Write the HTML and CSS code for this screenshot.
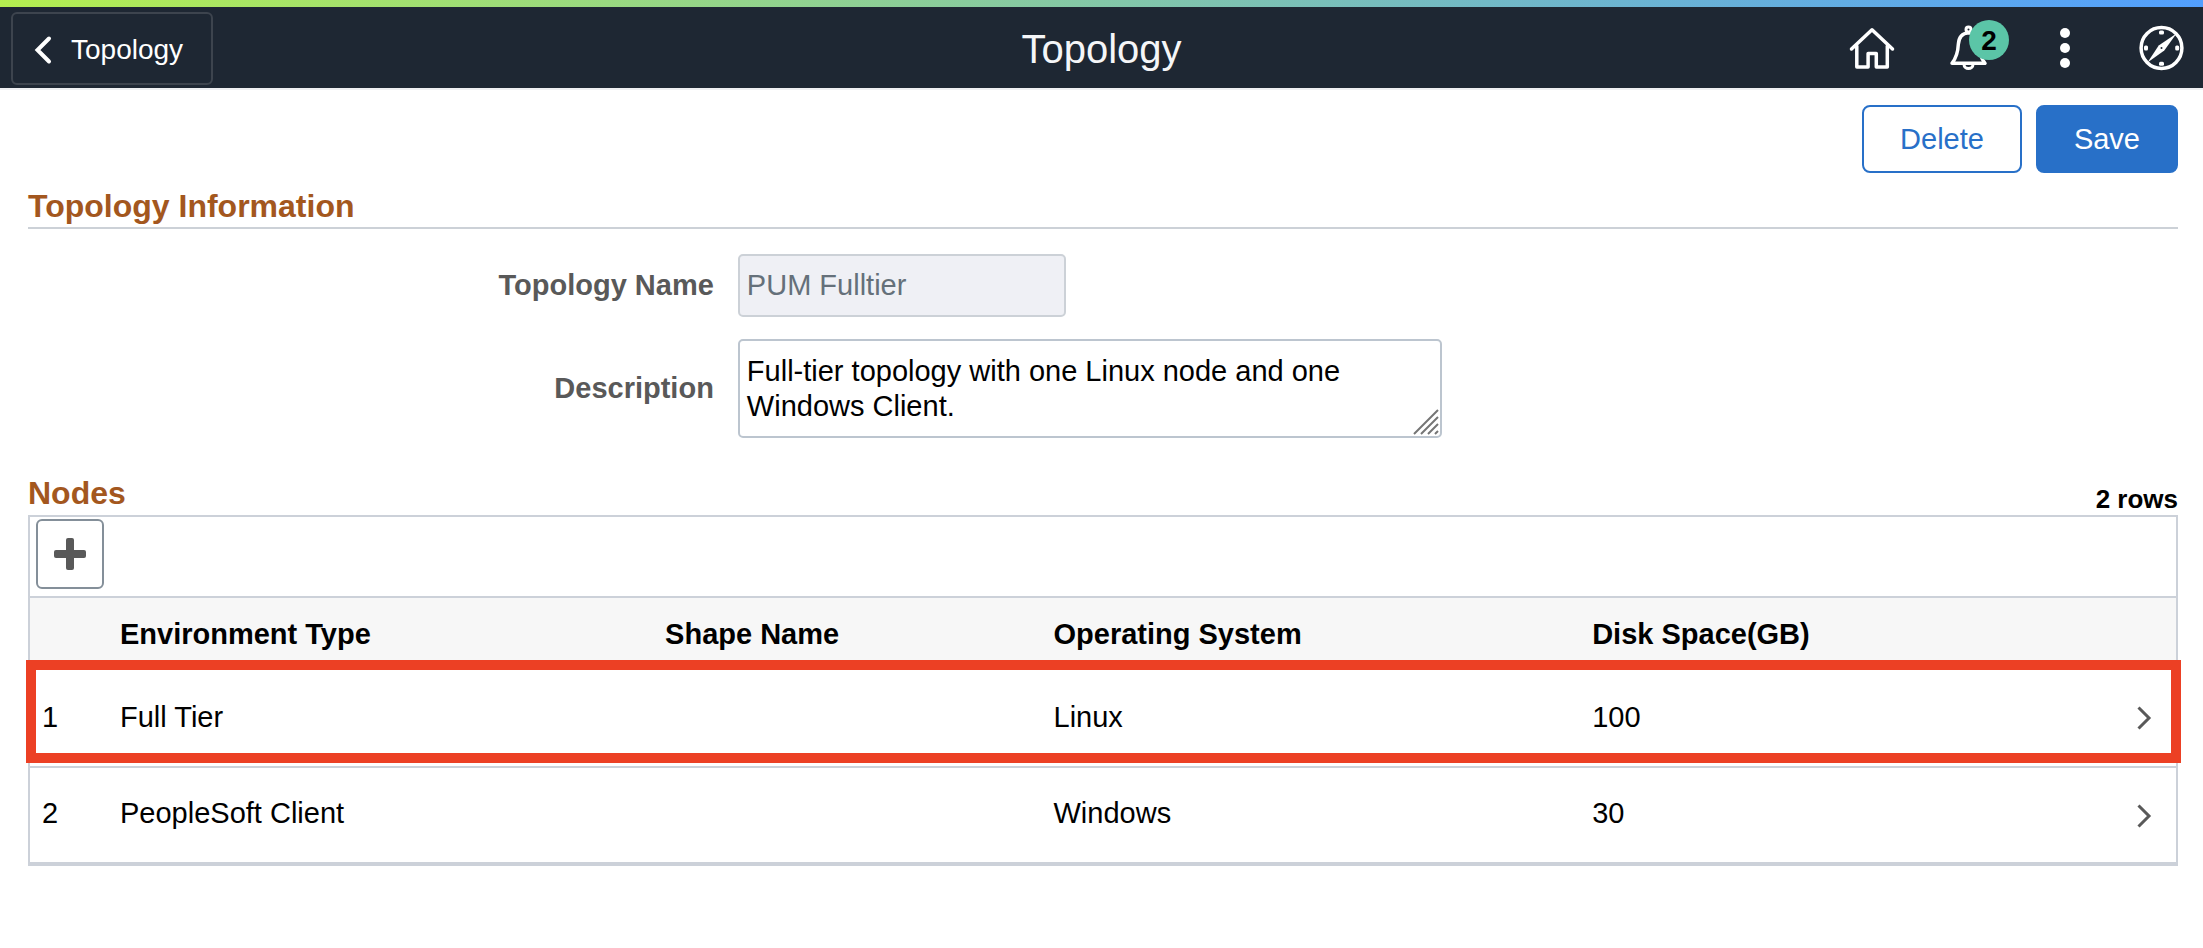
FILE: index.html
```html
<!DOCTYPE html>
<html lang="en">
<head>
<meta charset="utf-8">
<meta name="viewport" content="width=device-width, initial-scale=1">
<title>Topology</title>
<link rel="stylesheet" href="styles.css">
</head>
<body>
<header class="banner">
  <div class="banner-start">
    <button type="button" class="back">
      <svg class="back-icon" width="20" height="30" viewBox="0 0 20 30" aria-hidden="true"><path d="M16 3.5 4.5 15 16 26.500"/></svg>
      <span>Topology</span>
    </button>
  </div>
  <h1 class="banner-title">Topology</h1>
  <nav class="banner-actions" aria-label="Global actions">
    <button type="button" class="icon-button" aria-label="Home">
      <svg width="48" height="49" viewBox="0 0 48 49" aria-hidden="true">
        <path class="line" d="M4.500 25 25 5.800 45.500 25M9.800 22v21.100h11.300V29.600h8.200v13.500h11V22"/>
      </svg>
    </button>
    <button type="button" class="icon-button" aria-label="Notifications">
      <svg width="48" height="49" viewBox="0 0 48 49" aria-hidden="true">
        <path class="line" d="M8 39.300C12.500 33.500 14 28 14.300 20.500 14.800 13.500 18 9.300 24.500 8.800 31 9.300 34.300 13.500 34.700 20.500 35 28 36.500 33.500 41 39.300Z"/>
        <circle class="line thin" cx="24.500" cy="5.500" r="2.500"/>
        <path class="line thin" d="M20 40.500a4.500 4 0 0 0 9 0"/>
      </svg>
      <span class="badge">2</span>
    </button>
    <button type="button" class="icon-button" aria-label="Actions">
      <svg width="48" height="49" viewBox="0 0 48 49" aria-hidden="true">
        <g class="fill"><circle cx="24" cy="9" r="5"/><circle cx="24" cy="24" r="5"/><circle cx="24" cy="39" r="5"/></g>
      </svg>
    </button>
    <button type="button" class="icon-button" aria-label="Navigator">
      <svg width="48" height="49" viewBox="0 0 48 49" aria-hidden="true">
        <circle class="line" cx="23.500" cy="24" r="20.400"/>
        <path class="fill" d="M38.500 9.500 26.300 26.500 9.500 38.500 20.700 21.500Z"/>
        <circle class="hole" cx="23.500" cy="24" r="1"/>
        <g class="fill"><rect x="21" y="6.500" width="5" height="4" rx="1.500"/><rect x="21" y="37.700" width="5" height="4" rx="1.500"/><rect x="6" y="21.500" width="4" height="5" rx="1.500"/><rect x="37.200" y="21.500" width="4" height="5" rx="1.500"/></g>
      </svg>
    </button>
  </nav>
</header>

<main class="page">
  <div class="page-actions">
    <button type="button" class="button">Delete</button>
    <button type="submit" class="button primary" form="topology-form">Save</button>
  </div>

  <h2 class="section-title ruled">Topology Information</h2>
  <form class="form" id="topology-form">
    <label class="form-label" for="name">Topology Name</label>
    <input class="field name-field" id="name" type="text" value="PUM Fulltier" disabled>
    <label class="form-label" for="description">Description</label>
    <div class="description">
      <textarea class="field description-field" id="description">Full-tier topology with one Linux node and one Windows Client.</textarea>
      <svg class="grip" width="26" height="26" viewBox="0 0 26 26" aria-hidden="true"><path d="M1 25 25 1M8 25 25 8M15 25l10-10M22 25l3-3"/></svg>
    </div>
  </form>

  <div class="grid-head">
    <h2 class="section-title" id="nodes">Nodes</h2>
    <span class="row-count">2 rows</span>
  </div>
  <div class="grid">
    <div class="grid-tools">
      <button type="button" class="add" aria-label="Add node">
        <svg width="32" height="32" viewBox="0 0 32 32" aria-hidden="true"><rect x="12" width="8" height="32" rx="2"/><rect y="12" width="32" height="8" rx="2"/></svg>
      </button>
    </div>
    <table class="nodes" aria-labelledby="nodes">
      <colgroup><col class="col-number"><col class="col-type"><col class="col-shape"><col class="col-system"><col><col class="col-open"></colgroup>
      <thead>
        <tr><th></th><th scope="col">Environment Type</th><th scope="col">Shape Name</th><th scope="col">Operating System</th><th scope="col">Disk Space(GB)</th><th></th></tr>
      </thead>
      <tbody>
        <tr class="marked">
          <td>1</td><td>Full Tier</td><td></td><td>Linux</td><td>100</td>
          <td class="open-cell"><button type="button" class="open" aria-label="Open node 1"><svg width="16" height="24" viewBox="0 0 16 24" aria-hidden="true"><path d="M2.500 1.500 13 12 2.500 22.500"/></svg></button></td>
        </tr>
        <tr>
          <td>2</td><td>PeopleSoft Client</td><td></td><td>Windows</td><td>30</td>
          <td class="open-cell"><button type="button" class="open" aria-label="Open node 2"><svg width="16" height="24" viewBox="0 0 16 24" aria-hidden="true"><path d="M2.500 1.500 13 12 2.500 22.500"/></svg></button></td>
        </tr>
      </tbody>
    </table>
  </div>
</main>
</body>
</html>
```
FILE: styles.css
```css
* {
  box-sizing: border-box;
}

body {
  margin: 0;
  background: #fff;
  color: #000;
  font-family: "Liberation Sans", Arial, sans-serif;
  font-size: 29px;
  line-height: 35px;
}

button,
input,
textarea {
  margin: 0;
  font: inherit;
}

svg {
  display: block;
}

/* Banner */
body::before {
  content: "";
  display: block;
  height: 7px;
  background: linear-gradient(90deg, #b4ef50, #529fff);
}

.banner {
  display: grid;
  grid-template-columns: 1fr auto 1fr;
  align-items: center;
  padding: 5px 11px 3px;
  background: #1e2733;
  border-bottom: 2px solid #eff0f3;
  color: #f5f6f8;
}

.back {
  display: flex;
  align-items: center;
  gap: 18px;
  height: 73px;
  padding: 2px 28px 0 20px;
  background: none;
  border: 2px solid #3d444e;
  border-radius: 6px;
  color: #fff;
  font-size: 28px;
}

.back-icon {
  fill: none;
  stroke: #fff;
  stroke-width: 4;
  stroke-linecap: round;
}

.banner-title {
  margin: 0;
  font-size: 40px;
  font-weight: 400;
  line-height: 48px;
}

.banner-actions {
  display: flex;
  justify-content: flex-end;
  gap: 49px;
  padding-right: 6px;
}

.icon-button {
  position: relative;
  padding: 0;
  background: none;
  border: 0;
}

.line {
  fill: none;
  stroke: #fff;
  stroke-width: 3.5;
  stroke-linecap: round;
  stroke-linejoin: round;
}

.thin {
  stroke-width: 3;
}

.fill {
  fill: #fff;
}

.hole {
  fill: #1e2733;
}

.badge {
  position: absolute;
  top: -4px;
  left: 25px;
  width: 40px;
  height: 40px;
  border-radius: 50%;
  background: #5bc5a7;
  color: #000;
  font-size: 28px;
  font-weight: 700;
  line-height: 42px;
  text-align: center;
}

/* Page */
.page {
  padding: 15px 25px 28px 28px;
}

.page-actions {
  display: flex;
  justify-content: flex-end;
  gap: 14px;
}

.button {
  height: 68px;
  padding: 0 36px;
  background: #fff;
  border: 2px solid #2870c8;
  border-radius: 8px;
  color: #2870c8;
}

.primary {
  background: #2870c8;
  color: #fff;
}

.section-title {
  margin: 0;
  color: #a3571e;
  font-size: 32px;
  line-height: 36px;
}

.ruled {
  margin-top: 15px;
  padding-bottom: 3px;
  border-bottom: 2px solid #ccd1d7;
}

/* Form */
.form {
  display: grid;
  grid-template-columns: 31.9% 1fr;
  gap: 22px 24px;
  align-items: center;
  margin-top: 25px;
}

.form-label {
  color: #595959;
  font-weight: 700;
  text-align: right;
}

.field {
  display: block;
  border: 2px solid #bcc5cf;
  border-radius: 5px;
  background: #fff;
  color: #000;
}

.name-field {
  width: 328px;
  height: 63px;
  padding: 0 7px;
  background: #eff0f5;
  border-color: #ccd1d7;
  color: #65707a;
}

.description {
  position: relative;
  width: 704px;
  max-width: 100%;
}

.description-field {
  width: 100%;
  height: 99px;
  padding: 13px 7px;
  overflow: hidden;
  resize: none;
}

.grip {
  position: absolute;
  right: 3px;
  bottom: 3px;
  fill: none;
  stroke: #757575;
  stroke-width: 2;
}

/* Nodes grid */
.grid-head {
  display: flex;
  justify-content: space-between;
  height: 40px;
  margin-top: 37px;
}

.row-count {
  align-self: flex-end;
  font-size: 26px;
  font-weight: 700;
  line-height: 32px;
}

.grid {
  border: 2px solid #ccd1d9;
}

.grid-tools {
  padding: 2px 6px 7px;
  border-bottom: 2px solid #ccd1d9;
}

.add {
  display: grid;
  place-items: center;
  width: 68px;
  height: 70px;
  padding: 0;
  background: #fff;
  border: 2px solid #848f99;
  border-radius: 6px;
  fill: #595959;
}

.nodes {
  width: 100%;
  border-spacing: 0;
  table-layout: fixed;
}

.col-number {
  width: 90px;
}

.col-type {
  width: 25.4%;
}

.col-shape {
  width: 18.1%;
}

.col-system {
  width: 25.1%;
}

.col-open {
  width: 48px;
}

.nodes th,
.nodes td {
  padding: 0 0 4px;
  text-align: left;
}

.nodes th {
  height: 72px;
  padding-bottom: 0;
  background: #f7f7f7;
}

.nodes td {
  height: 96px;
  border-bottom: 2px solid #ccd1d9;
}

.nodes .marked td {
  height: 98px;
  padding-bottom: 2px;
}

.nodes td:first-child {
  padding-left: 12px;
}

.nodes .open-cell {
  padding: 6px 0 0;
}

.open {
  padding: 0 8px;
  background: none;
  border: 0;
}

.open path {
  fill: none;
  stroke: #595959;
  stroke-width: 3;
}

/* Frame drawn over the marked row */
.marked {
  position: relative;
}

.marked td:first-child::after {
  content: "";
  position: absolute;
  inset: -10px -5px 5px -4px;
  border: 10px solid #ec4024;
  pointer-events: none;
}
```
